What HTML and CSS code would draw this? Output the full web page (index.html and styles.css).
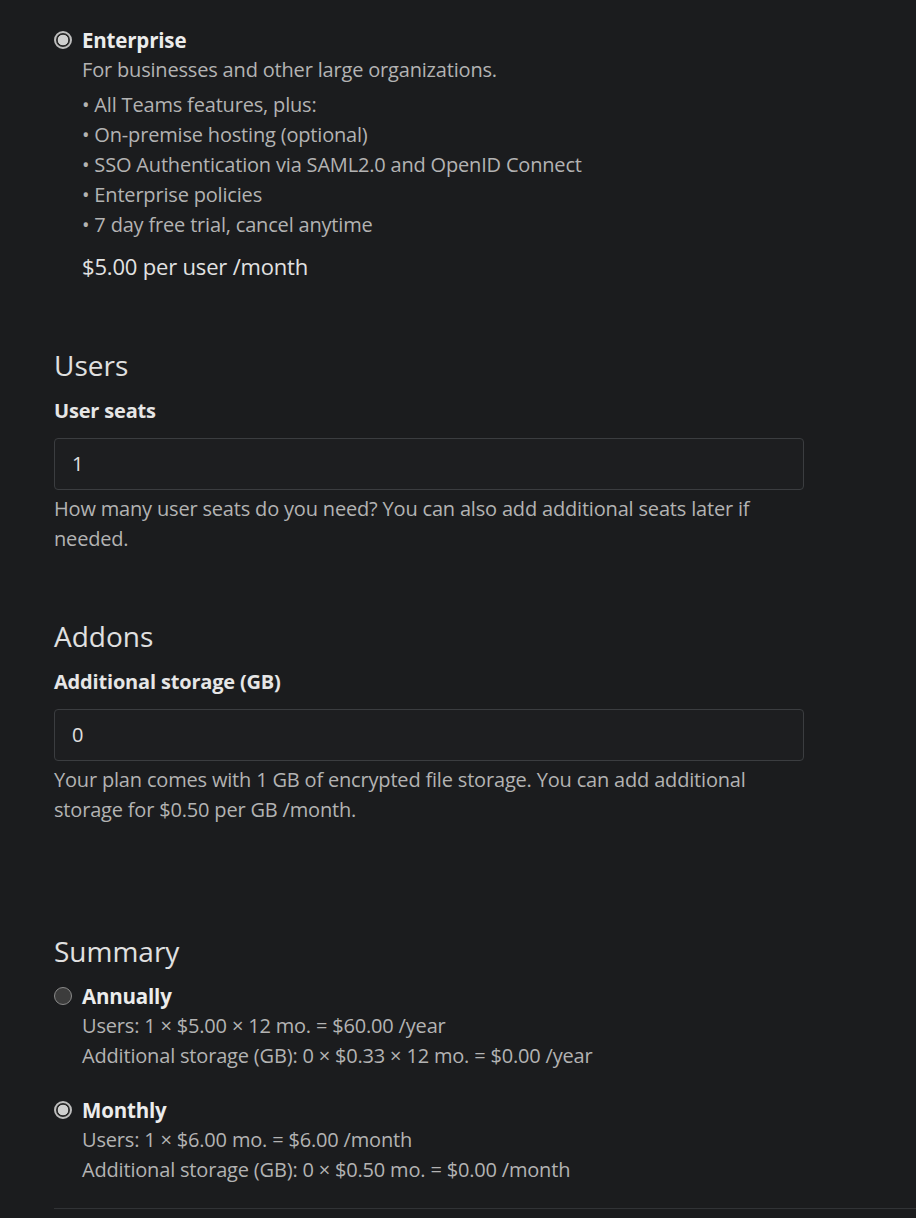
FILE: index.html
```html
<!DOCTYPE html>
<html lang="en">
<head>
<meta charset="utf-8">
<title>Plan</title>
<link rel="stylesheet" href="styles.css">
</head>
<body>
<div class="page">
  <div class="plan">
    <span class="radio checked"></span>
    <div class="plan-body">
      <div class="plan-name">Enterprise</div>
      <div class="muted desc">For businesses and other large organizations.</div>
      <ul class="features muted">
        <li>All Teams features, plus:</li>
        <li>On-premise hosting (optional)</li>
        <li>SSO Authentication via SAML2.0 and OpenID Connect</li>
        <li>Enterprise policies</li>
        <li>7 day free trial, cancel anytime</li>
      </ul>
      <div class="price">$5.00 per user /month</div>
    </div>
  </div>

  <h2 class="section users">Users</h2>
  <div class="field">
    <label class="label">User seats</label>
    <div class="input">1</div>
    <div class="help muted">How many user seats do you need? You can also add additional seats later if needed.</div>
  </div>

  <h2 class="section addons">Addons</h2>
  <div class="field">
    <label class="label">Additional storage (GB)</label>
    <div class="input">0</div>
    <div class="help muted">Your plan comes with 1 GB of encrypted file storage. You can add additional storage for $0.50 per GB /month.</div>
  </div>

  <h2 class="section summary">Summary</h2>
  <div class="plan cycle">
    <span class="radio"></span>
    <div class="plan-body">
      <div class="plan-name">Annually</div>
      <div class="muted">Users: 1 × $5.00 × 12 mo. = $60.00 /year</div>
      <div class="muted">Additional storage (GB): 0 × $0.33 × 12 mo. = $0.00 /year</div>
    </div>
  </div>
  <div class="plan cycle monthly">
    <span class="radio checked"></span>
    <div class="plan-body">
      <div class="plan-name">Monthly</div>
      <div class="muted">Users: 1 × $6.00 mo. = $6.00 /month</div>
      <div class="muted">Additional storage (GB): 0 × $0.50 mo. = $0.00 /month</div>
    </div>
  </div>
  <hr class="rule">
</div>
</body>
</html>
```

FILE: styles.css
```css
html, body {
  margin: 0;
  padding: 0;
  background: #1b1c1e;
}
body {
  font-family: "Open Sans", "DejaVu Sans", sans-serif;
  font-size: 20px;
  line-height: 30px;
  letter-spacing: -0.18px;
  color: #e6e6e6;
  overflow: hidden;
}
.page {
  padding: 25px 0 0 54px;
}
.plan {
  display: flex;
  align-items: flex-start;
  gap: 10px;
}
.radio {
  box-sizing: border-box;
  width: 18px;
  height: 18px;
  margin-top: 6px;
  border-radius: 50%;
  border: 1.5px solid #8a8a8a;
  background: #3c3c3c;
  flex: none;
}
.radio.checked {
  border: 2px solid #bdbdbd;
  background: radial-gradient(circle, #cfcfcf 0 5px, #2a2a2a 5.6px);
}
.plan-name {
  font-weight: 700;
  font-size: 20.5px;
  color: #ececec;
}
.muted {
  color: #b3b3b3;
}
.features {
  list-style: none;
  margin: 5px 0 0;
  padding: 0;
}
.features li::before {
  content: "• ";
}
.price {
  margin-top: 11px;
  font-size: 22px;
  color: #e2e2e2;
}
.section {
  margin: 0;
  font-weight: 400;
  font-size: 28px;
  line-height: 36px;
  letter-spacing: 0;
  color: #e0e0e0;
}
.users { margin-top: 66px; }
.addons { margin-top: 64px; }
.summary { margin-top: 108px; }
.field {
  width: 750px;
}
.label {
  display: block;
  font-weight: 700;
  color: #e6e6e6;
  margin-top: 13px;
}
.input {
  box-sizing: border-box;
  height: 52px;
  margin-top: 12px;
  border: 1px solid #3b3d40;
  border-radius: 4px;
  background: #1d1e20;
  padding: 10px 17px;
  color: #e0e0e0;
}
.help {
  margin-top: 4px;
}
.cycle {
  margin-top: 12px;
}
.monthly {
  margin-top: 24px;
}
.rule {
  border: 0;
  border-top: 1px solid #313336;
  margin: 23px 0 0;
}
```
